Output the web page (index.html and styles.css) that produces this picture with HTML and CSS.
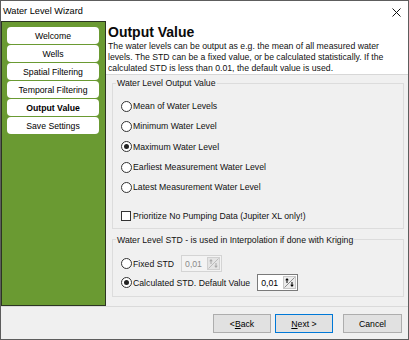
FILE: index.html
```html
<!DOCTYPE html>
<html>
<head>
<meta charset="utf-8">
<title>Water Level Wizard</title>
<link rel="stylesheet" href="styles.css">
</head>
<body>
<div class="window">
  <div class="titlebar">
    <span class="title">Water Level Wizard</span>
    <svg class="close" width="9" height="9" viewBox="0 0 9 9"><path d="M0.5 0.5L8.5 8.5M8.5 0.5L0.5 8.5" stroke="#111" stroke-width="1"/></svg>
  </div>
  <div class="main">
    <nav class="sidebar">
      <div class="navbtn">Welcome</div>
      <div class="navbtn">Wells</div>
      <div class="navbtn">Spatial Filtering</div>
      <div class="navbtn">Temporal Filtering</div>
      <div class="navbtn active">Output Value</div>
      <div class="navbtn">Save Settings</div>
    </nav>
    <div class="content">
      <div class="header">
        <h1>Output Value</h1>
        <p class="desc">The water levels can be output as e.g. the mean of all measured water<br>levels. The STD can be a fixed value, or be calculated statistically. If the<br>calculated STD is less than 0.01, the default value is used.</p>
      </div>
      <div class="body">
        <fieldset class="group g1">
          <legend>Water Level Output Value</legend>
          <div class="opt"><span class="radio"></span>Mean of Water Levels</div>
          <div class="opt"><span class="radio"></span>Minimum Water Level</div>
          <div class="opt"><span class="radio on"></span>Maximum Water Level</div>
          <div class="opt"><span class="radio"></span>Earliest Measurement Water Level</div>
          <div class="opt"><span class="radio"></span>Latest Measurement Water Level</div>
          <div class="opt check"><span class="box"></span>Prioritize No Pumping Data (Jupiter XL only!)</div>
        </fieldset>
        <fieldset class="group g2">
          <legend>Water Level STD - is used in Interpolation if done with Kriging</legend>
          <div class="opt"><span class="radio"></span>Fixed STD
            <span class="spin disabled"><span class="val">0,01</span>
              <svg width="13" height="13" viewBox="0 0 13 13"><rect x="0.5" y="0.5" width="12" height="12" fill="#e4e4e4" stroke="#d0d0d0"/><path d="M1.5 11.5L11.5 1.5" stroke="#bcbcbc"/><path d="M4 3V7" stroke="#a8a8a8"/><path d="M2.2 4.2L4 2L5.8 4.2Z" fill="#a8a8a8"/><path d="M9 6V10" stroke="#a8a8a8"/><path d="M7.2 8.8L9 11L10.8 8.8Z" fill="#a8a8a8"/></svg>
            </span>
          </div>
          <div class="opt"><span class="radio on"></span>Calculated STD. Default Value
            <span class="spin"><span class="val">0,01</span>
              <svg width="13" height="13" viewBox="0 0 13 13"><rect x="0.5" y="0.5" width="12" height="12" fill="#ececec" stroke="#c8c8c8"/><path d="M1.5 11.5L11.5 1.5" stroke="#8c8c8c"/><path d="M4 3V7" stroke="#000"/><path d="M2.2 4.2L4 2L5.8 4.2Z" fill="#000"/><path d="M9 6V10" stroke="#000"/><path d="M7.2 8.8L9 11L10.8 8.8Z" fill="#000"/></svg>
            </span>
          </div>
        </fieldset>
      </div>
    </div>
  </div>
  <div class="footer">
    <div class="btn">&lt; <u>B</u>ack</div>
    <div class="btn default"><u>N</u>ext &gt;</div>
    <div class="btn cancel">Cancel</div>
  </div>
</div>
</body>
</html>
```
FILE: styles.css
```css
html, body {
  margin: 0;
  padding: 0;
}
body {
  font-family: "Liberation Sans", Arial, sans-serif;
  font-size: 8.7px;
  color: #000;
  background: #fff;
}
.window {
  width: 409px;
  height: 340px;
  box-sizing: border-box;
  border: 1px solid #5d5d5d;
  background: #f0f0f0;
  display: flex;
  flex-direction: column;
}
.titlebar {
  height: 20px;
  flex: none;
  background: #fff;
  display: flex;
  align-items: center;
  justify-content: space-between;
  padding: 0 7px 0 2px;
  font-size: 9.2px;
}
.close {
  display: block;
  margin-top: 2px;
}
.main {
  height: 285px;
  flex: none;
  display: flex;
}
.sidebar {
  width: 105px;
  flex: none;
  box-sizing: border-box;
  border: 1px solid #2c3522;
  background: #6a9a32;
  padding: 5px 6px 0 5px;
  display: flex;
  flex-direction: column;
  gap: 1px;
}
.navbtn {
  height: 17px;
  background: #fff;
  border-radius: 4px;
  display: flex;
  align-items: center;
  justify-content: center;
  white-space: nowrap;
}
.navbtn.active {
  font-weight: bold;
}
.content {
  flex: 1;
  min-width: 0;
  display: flex;
  flex-direction: column;
}
.header {
  height: 54px;
  flex: none;
  box-sizing: border-box;
  background: #fff;
  border-bottom: 1px solid #d7d7d7;
  padding: 3px 4px 0 2px;
}
.header h1 {
  margin: 0;
  font-size: 14px;
  line-height: 16px;
  font-weight: bold;
  color: #0a0a0a;
}
.desc {
  margin: 1px 0 0;
  line-height: 11px;
  white-space: nowrap;
  color: #111;
}
.body {
  flex: 1;
  padding: 0 4px 0 6px;
}
.group {
  margin: 2px 0 0;
  border: 1px solid #dcdcdc;
  padding: 7px 4px 5px 3px;
  min-width: 0;
}
.group legend {
  padding: 0 1px;
  line-height: 12px;
  color: #111;
}
.opt {
  height: 20.3px;
  display: flex;
  align-items: center;
  margin-left: 5px;
  white-space: nowrap;
  color: #111;
}
.radio {
  width: 11px;
  height: 11px;
  flex: none;
  box-sizing: border-box;
  border: 1px solid #333;
  border-radius: 50%;
  background: #fff;
  margin-right: 1px;
  display: flex;
  align-items: center;
  justify-content: center;
}
.radio.on::after {
  content: "";
  width: 5px;
  height: 5px;
  border-radius: 50%;
  background: #222;
}
.opt.check {
  height: 14px;
  margin-top: 11.5px;
}
.box {
  width: 10px;
  height: 10px;
  flex: none;
  box-sizing: border-box;
  border: 1px solid #333;
  background: #fff;
  margin-right: 2px;
}
.g2 {
  margin-top: 5px;
  padding: 8.5px 4px 4px 3px;
}
.g2 .opt {
  height: 19px;
}
.spin {
  width: 41px;
  height: 17px;
  flex: none;
  box-sizing: border-box;
  border: 1px solid #7a7a7a;
  background: #fff;
  display: flex;
  align-items: center;
  justify-content: space-between;
  padding: 0 1px 0 3px;
  margin-left: 7px;
  color: #000;
}
.spin svg {
  display: block;
}
.spin.disabled {
  border-color: #d4d4d4;
  background: #f3f3f3;
  color: #8a8a8a;
}
.footer {
  flex: 1;
  border-top: 1px solid #dadada;
  display: flex;
  justify-content: flex-end;
  align-items: flex-start;
  padding: 7px 6px 0 0;
  gap: 4px;
}
.btn {
  width: 58px;
  height: 19px;
  box-sizing: border-box;
  border: 1px solid #adadad;
  background: #e1e1e1;
  display: flex;
  align-items: center;
  justify-content: center;
  white-space: nowrap;
}
.btn.default {
  border-color: #0078d7;
}
.btn.cancel {
  width: 59px;
  margin-left: 6px;
}
```
